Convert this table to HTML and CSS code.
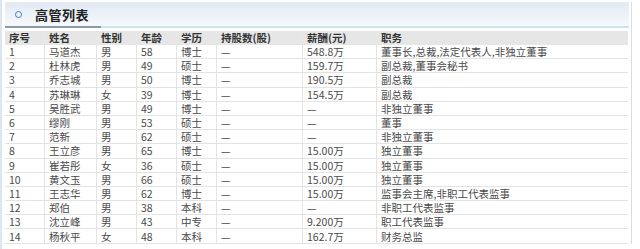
FILE: index.html
```html
<!DOCTYPE html>
<html>
<head>
<meta charset="utf-8">
<link rel="stylesheet" href="styles.css">
</head>
<body>
<div class="wrap">
  <div class="panel">
    <div class="title-bar">
      <span class="dot"></span>
      <span class="title">高管列表</span>
    </div>
    <div class="title-line"><span class="dark"></span></div>
    <table class="grid">
      <thead>
        <tr><th class="c1">序号</th><th class="c2">姓名</th><th class="c3">性别</th><th class="c4">年龄</th><th class="c5">学历</th><th class="c6">持股数(股)</th><th class="c7">薪酬(元)</th><th class="c8">职务</th></tr>
      </thead>
      <tbody>
        <tr><td>1</td><td>马道杰</td><td>男</td><td>58</td><td>博士</td><td>—</td><td>548.8万</td><td>董事长,总裁,法定代表人,非独立董事</td></tr>
        <tr><td>2</td><td>杜林虎</td><td>男</td><td>49</td><td>硕士</td><td>—</td><td>159.7万</td><td>副总裁,董事会秘书</td></tr>
        <tr><td>3</td><td>乔志城</td><td>男</td><td>50</td><td>博士</td><td>—</td><td>190.5万</td><td>副总裁</td></tr>
        <tr><td>4</td><td>苏琳琳</td><td>女</td><td>39</td><td>博士</td><td>—</td><td>154.5万</td><td>副总裁</td></tr>
        <tr><td>5</td><td>吴胜武</td><td>男</td><td>49</td><td>博士</td><td>—</td><td>—</td><td>非独立董事</td></tr>
        <tr><td>6</td><td>缪刚</td><td>男</td><td>53</td><td>硕士</td><td>—</td><td>—</td><td>董事</td></tr>
        <tr><td>7</td><td>范新</td><td>男</td><td>62</td><td>硕士</td><td>—</td><td>—</td><td>非独立董事</td></tr>
        <tr><td>8</td><td>王立彦</td><td>男</td><td>65</td><td>博士</td><td>—</td><td>15.00万</td><td>独立董事</td></tr>
        <tr><td>9</td><td>崔若彤</td><td>女</td><td>36</td><td>硕士</td><td>—</td><td>15.00万</td><td>独立董事</td></tr>
        <tr><td>10</td><td>黄文玉</td><td>男</td><td>66</td><td>硕士</td><td>—</td><td>15.00万</td><td>独立董事</td></tr>
        <tr><td>11</td><td>王志华</td><td>男</td><td>62</td><td>博士</td><td>—</td><td>15.00万</td><td>监事会主席,非职工代表监事</td></tr>
        <tr><td>12</td><td>郑伯</td><td>男</td><td>38</td><td>本科</td><td>—</td><td>—</td><td>非职工代表监事</td></tr>
        <tr><td>13</td><td>沈立峰</td><td>男</td><td>43</td><td>中专</td><td>—</td><td>9.200万</td><td>职工代表监事</td></tr>
        <tr><td>14</td><td>杨秋平</td><td>女</td><td>48</td><td>本科</td><td>—</td><td>162.7万</td><td>财务总监</td></tr>
      </tbody>
    </table>
  </div>
</div>
</body>
</html>
```
FILE: styles.css
```css
html, body {
  margin: 0;
  padding: 0;
  background: #ffffff;
}
.wrap {
  width: 640px;
  height: 249px;
  border-left: 2px solid #dbe6f1;
  box-sizing: border-box;
  padding: 2px 8px 0 3px;
  font-family: "Noto Sans CJK SC", "Liberation Sans", sans-serif;
  color: #333;
}
.panel {
  width: 624px;
  border-right: 1px solid #d6dde6;
  padding-right: 2px;
}
.title-bar {
  height: 24px;
  display: flex;
  align-items: center;
  background: linear-gradient(#e1e9f4, #f6f9fc);
  padding-left: 10px;
}
.dot {
  width: 5px;
  height: 5px;
  border: 1.5px solid #3d7fc6;
  border-radius: 50%;
  margin-right: 13px;
}
.title {
  font-size: 13px;
  font-weight: bold;
  color: #222;
  letter-spacing: 0.5px;
}
.title-line {
  height: 2px;
  background: #cfe3e8;
  display: flex;
}
.title-line .dark {
  width: 96px;
  background: #8a9aa8;
}
.grid {
  margin-top: 3px;
  width: 623px;
  border-collapse: collapse;
  font-size: 10.5px;
  table-layout: fixed;
}
.grid th {
  background: #e6e6e6;
  font-weight: bold;
  color: #333;
  text-align: left;
  height: 14px;
  padding: 0 0 0 4px;
  border-right: 1px solid #e8e8e8;
  line-height: 14px;
}
.grid td {
  height: 13.2px;
  line-height: 13px;
  padding: 0 0 0 4px;
  border-bottom: 1px solid #e3e3e3;
  border-right: 1px solid #e3e3e3;
  white-space: nowrap;
  color: #4a4a4a;
}
.grid td:last-child, .grid th:last-child {
  border-right: none;
}
.c1 { width: 35px; }
.c2 { width: 47px; }
.c3 { width: 35px; }
.c4 { width: 35px; }
.c5 { width: 35px; }
.c6 { width: 81px; }
.c7 { width: 69px; }
```
